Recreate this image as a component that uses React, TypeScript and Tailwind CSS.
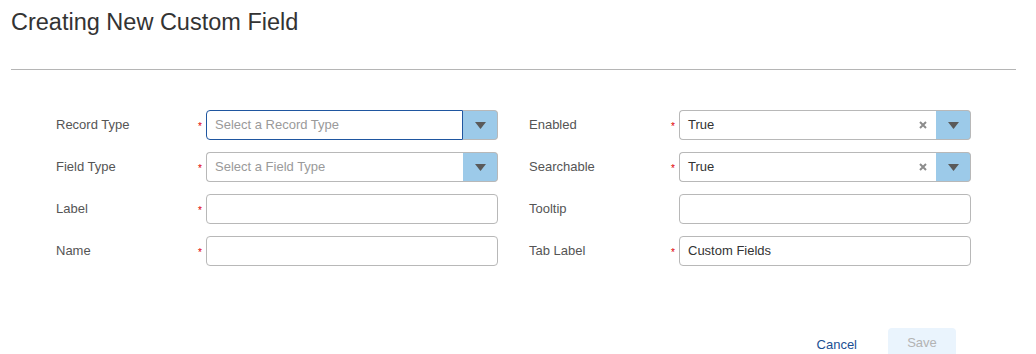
import React from "react";

const Caret = () => (
  <svg width="11" height="7" viewBox="0 0 11 7">
    <path d="M0 0 L11 0 L5.5 7 Z" fill="#5a5a5a" />
  </svg>
);

const ClearX = () => (
  <svg width="8" height="8" viewBox="0 0 8 8">
    <path d="M1 1 L7 7 M7 1 L1 7" stroke="#8c8c8c" strokeWidth="2" strokeLinecap="butt" />
  </svg>
);

function Label({ text, required }: { text: string; required?: boolean }) {
  return (
    <>
      <div className="w-[142px] shrink-0 text-[13px] text-[#555555]">{text}</div>
      <div className="w-[8px] shrink-0 text-[10px] leading-[10px] text-[#e00000] mt-[4px]">
        {required ? "*" : ""}
      </div>
    </>
  );
}

function SelectBox({
  value,
  placeholder,
  focused,
  clearable,
}: {
  value?: string;
  placeholder?: string;
  focused?: boolean;
  clearable?: boolean;
}) {
  return (
    <div className="flex w-[292px] h-[30px]">
      <div
        className={
          focused
            ? "flex-1 flex items-center border border-[#1f56a0] rounded-l-[4px] pl-[8px] pr-[9px] bg-white"
            : "flex-1 flex items-center border border-r-0 border-[#b8b8b8] rounded-l-[4px] pl-[8px] pr-[9px] bg-white"
        }
      >
        <span className={value ? "flex-1 text-[13px] text-[#333333]" : "flex-1 text-[13px] text-[#9a9a9a]"}>
          {value ?? placeholder}
        </span>
        {clearable ? <ClearX /> : null}
      </div>
      <div className="w-[35px] flex items-center justify-center bg-[#9ccae9] border border-l-0 border-[#b8b8b8] rounded-r-[4px]">
        <Caret />
      </div>
    </div>
  );
}

function TextBox({ value }: { value?: string }) {
  return (
    <div className="w-[292px] h-[30px] flex items-center border border-[#b8b8b8] rounded-[4px] pl-[8px] text-[13px] text-[#333333] bg-white">
      {value ?? ""}
    </div>
  );
}

export default function App() {
  return (
    <div className="w-[1036px] h-[354px] bg-white overflow-hidden font-['Liberation_Sans',Arial,sans-serif]">
      <h1 className="pl-[11px] pt-[8px] text-[23.5px] leading-[28px] text-[#333333]">
        Creating New Custom Field
      </h1>
      <div className="mx-[11px] mt-[33px] h-px bg-[#b5b5b5] w-[1005px]" />
      <div className="mt-[40px] pl-[56px] grid grid-cols-[442px_442px] gap-x-[31px] gap-y-[12px]">
        <div className="flex items-center">
          <Label text="Record Type" required />
          <SelectBox placeholder="Select a Record Type" focused />
        </div>
        <div className="flex items-center">
          <Label text="Enabled" required />
          <SelectBox value="True" clearable />
        </div>
        <div className="flex items-center">
          <Label text="Field Type" required />
          <SelectBox placeholder="Select a Field Type" />
        </div>
        <div className="flex items-center">
          <Label text="Searchable" required />
          <SelectBox value="True" clearable />
        </div>
        <div className="flex items-center">
          <Label text="Label" required />
          <TextBox />
        </div>
        <div className="flex items-center">
          <Label text="Tooltip" />
          <TextBox />
        </div>
        <div className="flex items-center">
          <Label text="Name" required />
          <TextBox />
        </div>
        <div className="flex items-center">
          <Label text="Tab Label" required />
          <TextBox value="Custom Fields" />
        </div>
      </div>
      <div className="mt-[62px] flex justify-end items-start pr-[80px] h-[30px]">
        <button className="mt-[9px] mr-[31px] text-[13px] leading-[16px] text-[#1b4f93]">Cancel</button>
        <button className="w-[68px] h-[30px] rounded-[4px] bg-[#eaf4fd] text-[13px] leading-[30px] text-[#b3b3b3]">
          Save
        </button>
      </div>
    </div>
  );
}
